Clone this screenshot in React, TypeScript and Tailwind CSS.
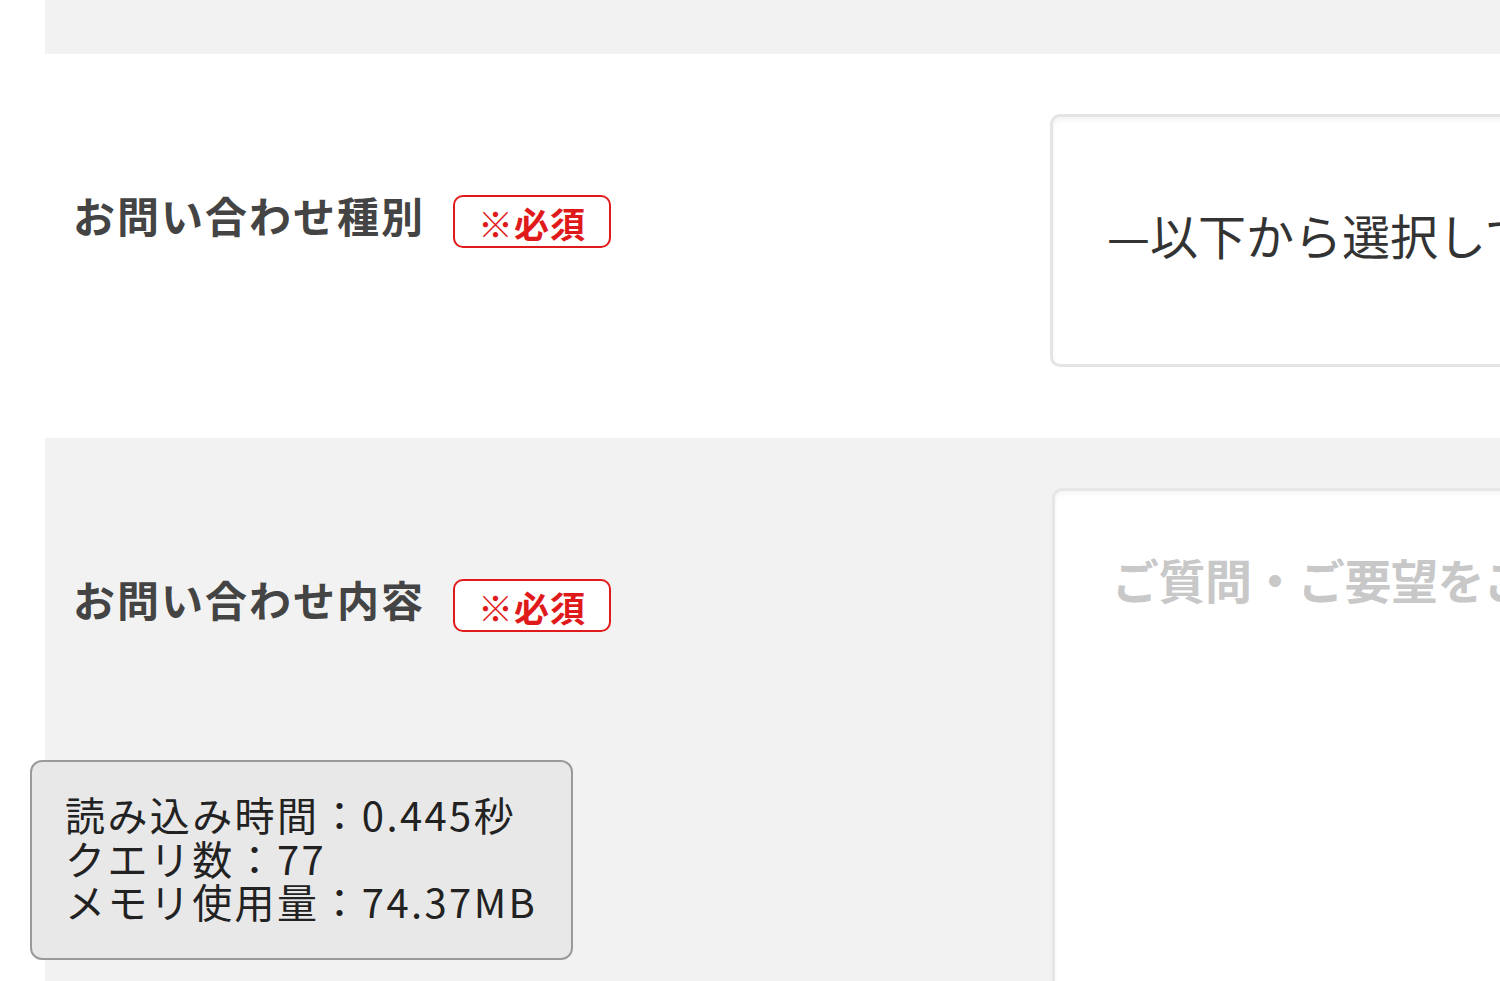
const font = { fontFamily: '"Noto Sans CJK JP", "Noto Sans", sans-serif' };

function Required() {
  return (
    <span className="ml-[28px] mt-[4px] inline-flex h-[53px] w-[158px] items-center justify-center rounded-[10px] border-2 border-[#e01a1a] bg-white pt-[2px] text-[35px] font-bold leading-none tracking-[1px] text-[#e01a1a]">
      ※必須
    </span>
  );
}

function Label({ text }: { text: string }) {
  return (
    <div className="flex items-start">
      <span className="text-[42px] font-bold leading-[48px] tracking-[2px] text-[#444]">{text}</span>
      <Required />
    </div>
  );
}

export default function App() {
  return (
    <div className="relative h-[981px] w-[1500px] overflow-hidden bg-white pl-[45px]" style={font}>
      <div className="h-[54px] bg-[#f2f2f2]" />

      <div className="flex h-[384px] bg-white">
        <div className="w-[1005px] shrink-0 pl-[28px] pt-[137px]">
          <Label text="お問い合わせ種別" />
        </div>
        <div className="pt-[60px]">
          <div className="flex h-[253px] w-[600px] items-center whitespace-nowrap rounded-[10px] border-[3px] border-[#e4e4e4] bg-white pb-[14px] pl-[54px] text-[48px] leading-none text-[#333] shadow-[inset_0_3px_4px_rgba(0,0,0,0.05)]">
            —以下から選択してください
          </div>
        </div>
      </div>

      <div className="flex h-[543px] bg-[#f2f2f2]">
        <div className="w-[1007px] shrink-0 pl-[28px] pt-[137px]">
          <Label text="お問い合わせ内容" />
        </div>
        <div className="pt-[50px]">
          <div className="h-[600px] w-[600px] whitespace-nowrap rounded-[10px] border-[3px] border-[#e6e6e6] bg-white pl-[57px] pt-[64px] text-[47px] font-bold leading-none tracking-[-0.5px] text-[#c8c8c8] shadow-[inset_0_3px_4px_rgba(0,0,0,0.04)]">
            ご質問・ご要望をご記入ください
          </div>
        </div>
      </div>

      <div className="absolute left-[30px] top-[760px] h-[200px] w-[543px] rounded-[12px] border-2 border-[#9a9a9a] bg-[#e8e8e8] pl-[33px] pt-[31px] text-[40px] leading-[43.5px] tracking-[2.4px] text-[#222]">
        <div>読み込み時間：0.445秒</div>
        <div>クエリ数：77</div>
        <div>メモリ使用量：74.37MB</div>
      </div>
    </div>
  );
}
